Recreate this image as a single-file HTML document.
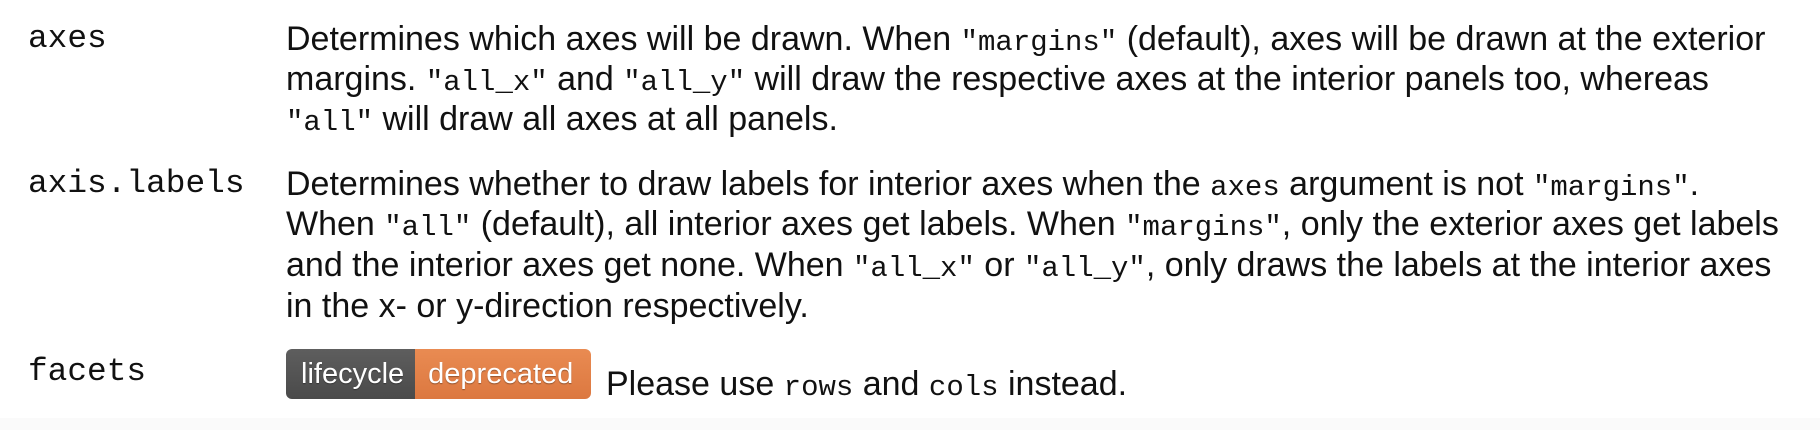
<!DOCTYPE html>
<html><head><meta charset="utf-8"><style>
html,body{margin:0;padding:0;width:1820px;height:430px;overflow:hidden;background:#fff;}
body{font-family:"Liberation Sans",Arial,sans-serif;font-size:34px;color:#111;position:relative;}
code,.m{font-family:"Liberation Mono",monospace;font-size:29px;}
.lbl{position:absolute;left:28px;font-family:"Liberation Mono",monospace;font-size:32.8px;}
.ln{position:absolute;left:286px;white-space:nowrap;line-height:40px;}
.foot{position:absolute;left:0;top:418px;width:1820px;height:12px;background:#fafafa;}
.badge{display:inline-flex;vertical-align:middle;border-radius:6px;overflow:hidden;height:50px;font-size:29px;color:#fff;text-shadow:0 1px 1px rgba(0,0,0,.35);}
.badge span{display:flex;align-items:center;}
.b1{background:linear-gradient(#5e5e5e,#4a4a4a);padding:0 11px 0 15px;}
.b2{background:linear-gradient(#e98b52,#dc7840);padding:0 18px 0 13px;}
</style></head><body>
<div class="lbl" style="top:19px;line-height:40px">axes</div>
<div class="ln" style="top:19px">Determines which axes will be drawn. When <code>"margins"</code> (default), axes will be drawn at the exterior</div>
<div class="ln" style="top:59px">margins. <code>"all_x"</code> and <code>"all_y"</code> will draw the respective axes at the interior panels too, whereas</div>
<div class="ln" style="top:99px"><code>"all"</code> will draw all axes at all panels.</div>

<div class="lbl" style="top:164px;line-height:40px">axis.labels</div>
<div class="ln" style="top:164px">Determines whether to draw labels for interior axes when the <code>axes</code> argument is not <code>"margins"</code>.</div>
<div class="ln" style="top:204px">When <code>"all"</code> (default), all interior axes get labels. When <code>"margins"</code>, only the exterior axes get labels</div>
<div class="ln" style="top:245px">and the interior axes get none. When <code>"all_x"</code> or <code>"all_y"</code>, only draws the labels at the interior axes</div>
<div class="ln" style="top:286px">in the x- or y-direction respectively.</div>

<div class="lbl" style="top:352px;line-height:40px">facets</div>
<div class="ln" style="top:347px;line-height:50px"><span class="badge"><span class="b1">lifecycle</span><span class="b2">deprecated</span></span></div>
<div class="ln" style="top:364px;left:606px">Please use <code>rows</code> and <code>cols</code> instead.</div>
<div class="foot"></div>
</body></html>
